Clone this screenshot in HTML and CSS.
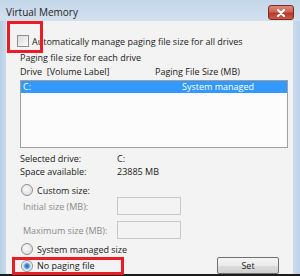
FILE: index.html
```html
<!DOCTYPE html>
<html>
<head>
    <link rel="stylesheet" href="styles.css">
</head>
<body>
  <div class="window">
    <div class="titlebar">
      <span class="title">Virtual Memory</span>
      <div class="close-btn">
        <svg width="10" height="8" viewBox="0 0 10 8"><path d="M2 1 L8 7 M8 1 L2 7" stroke="#fff" stroke-width="2.2" stroke-linecap="round"/></svg>
      </div>
    </div>
    <div class="panel">
      <div class="row auto-row">
        <span class="checkbox"></span>
        <span>Automatically manage paging file size for all drives</span>
      </div>
      <div class="group">
        <div class="group-label">Paging file size for each drive</div>
        <div class="list-head">
          <span class="col-drive">Drive&nbsp; [Volume Label]</span>
          <span>Paging File Size (MB)</span>
        </div>
        <div class="listbox">
          <div class="list-item selected">
            <span class="col-drive">C:</span>
            <span class="col-size">System managed</span>
          </div>
        </div>
        <div class="info-row first"><span class="col-info">Selected drive:</span><span>C:</span></div>
        <div class="info-row"><span class="col-info">Space available:</span><span>23885 MB</span></div>
        <div class="row radio-row custom-row"><span class="radio"></span><span>Custom size:</span></div>
        <div class="size-row first"><span class="col-size-label">Initial size (MB):</span><span class="textbox"></span></div>
        <div class="size-row"><span class="col-size-label">Maximum size (MB):</span><span class="textbox"></span></div>
        <div class="row radio-row system-row"><span class="radio"></span><span>System managed size</span></div>
        <div class="bottom-row">
          <div class="row radio-row"><span class="radio checked"></span><span>No paging file</span></div>
          <div class="set-btn">Set</div>
        </div>
      </div>
      <div class="mark mark-check"></div>
      <div class="mark mark-nopage"></div>
    </div>
  </div>
</body>
</html>
```

FILE: styles.css
```css
html, body {
  margin: 0;
  padding: 0;
}
body {
  width: 300px;
  height: 276px;
  overflow: hidden;
  background: #1c1c1c;
  font: 9px/13px "Open Sans", "Noto Sans", sans-serif;
  color: #1a1a1a;
}
.window {
  height: 274px;
  background: linear-gradient(to right, #b7cee6 0, #c9daec 6px, #c9daec 294px, #bcd3ea 300px);
  display: flex;
  flex-direction: column;
}
.titlebar {
  height: 21px;
  flex: none;
  display: flex;
  align-items: flex-start;
  justify-content: space-between;
  padding: 0 6px 0 6px;
  background: linear-gradient(#c4d6ea, #d3e0ee);
}
.title {
  font-size: 10px;
  line-height: 13px;
  margin-top: 6px;
  color: #1e1e1e;
}
.close-btn {
  width: 24px;
  height: 13px;
  margin-top: 5px;
  border: 1px solid #7a2a20;
  border-radius: 3px;
  background: linear-gradient(#e08a7e 0, #cf6252 45%, #b8392a 55%, #c85a45 100%);
  display: flex;
  align-items: center;
  justify-content: center;
}
.panel {
  position: relative;
  flex: 1;
  margin: 0 7px 0 6px;
  padding-top: 12px;
  background: #f3f3f3;
}
.row {
  display: flex;
  align-items: center;
}
.auto-row {
  height: 16px;
  padding-left: 11px;
}
.checkbox {
  width: 10px;
  height: 10px;
  border: 1px solid #8e8f8f;
  background: linear-gradient(135deg, #dcdcdc, #fbfbfb);
  margin-right: 3px;
  flex: none;
}
.group {
  margin: 2px 0 0 6px;
  padding-left: 8px;
}
.group-label {
  height: 14px;
  line-height: 14px;
}
.list-head {
  display: flex;
  height: 14px;
  line-height: 14px;
}
.col-drive {
  width: 135px;
  flex: none;
}
.listbox {
  margin-top: 1px;
  width: 266px;
  height: 66px;
  border: 1px solid #a0a0a0;
  background: #fcfcfc;
}
.list-item {
  display: flex;
  height: 12px;
  line-height: 12px;
  padding-left: 2px;
}
.selected {
  background: #3399ff;
  color: #fff;
}
.col-size {
  padding-left: 24px;
}
.info-row {
  display: flex;
  height: 13px;
  line-height: 13px;
}
.info-row.first {
  margin-top: 4px;
}
.col-info {
  width: 97px;
  flex: none;
}
.radio {
  width: 10px;
  height: 10px;
  border: 1px solid #8e8f8f;
  border-radius: 50%;
  background: radial-gradient(circle at 40% 40%, #fafafa, #d6d6d6);
  margin: 0 4px 0 1px;
  flex: none;
}
.radio.checked {
  background: radial-gradient(circle, #2a5fa8 0, #4f8fd8 2px, #bcd6f2 3.5px, #f4f4f4 4.5px);
}
.radio-row {
  height: 14px;
}
.custom-row {
  margin-top: 5px;
}
.size-row {
  display: flex;
  align-items: center;
  height: 18px;
  color: #8a8a8a;
  padding-left: 3px;
  margin-top: 6px;
}
.size-row.first {
  margin-top: 0;
}
.col-size-label {
  width: 94px;
  flex: none;
}
.textbox {
  width: 62px;
  height: 16px;
  border: 1px solid #c8c8c8;
  background: #f3f3f3;
}
.system-row {
  margin-top: 3px;
}
.bottom-row {
  display: flex;
  align-items: center;
  justify-content: space-between;
  height: 17px;
  margin-top: 1px;
  width: 259px;
}
.set-btn {
  width: 60px;
  height: 15px;
  line-height: 15px;
  text-align: center;
  border: 1px solid #707070;
  border-radius: 2px;
  background: linear-gradient(#f4f4f4 0, #ebebeb 50%, #dddddd 51%, #cfcfcf 100%);
}
.mark {
  position: absolute;
  border: 3px solid #ec1c24;
  box-sizing: border-box;
}
.mark-check {
  left: 1px;
  top: 0;
  width: 36px;
  height: 32px;
}
.mark-nopage {
  left: 6px;
  top: 236px;
  width: 112px;
  height: 18px;
}
```
